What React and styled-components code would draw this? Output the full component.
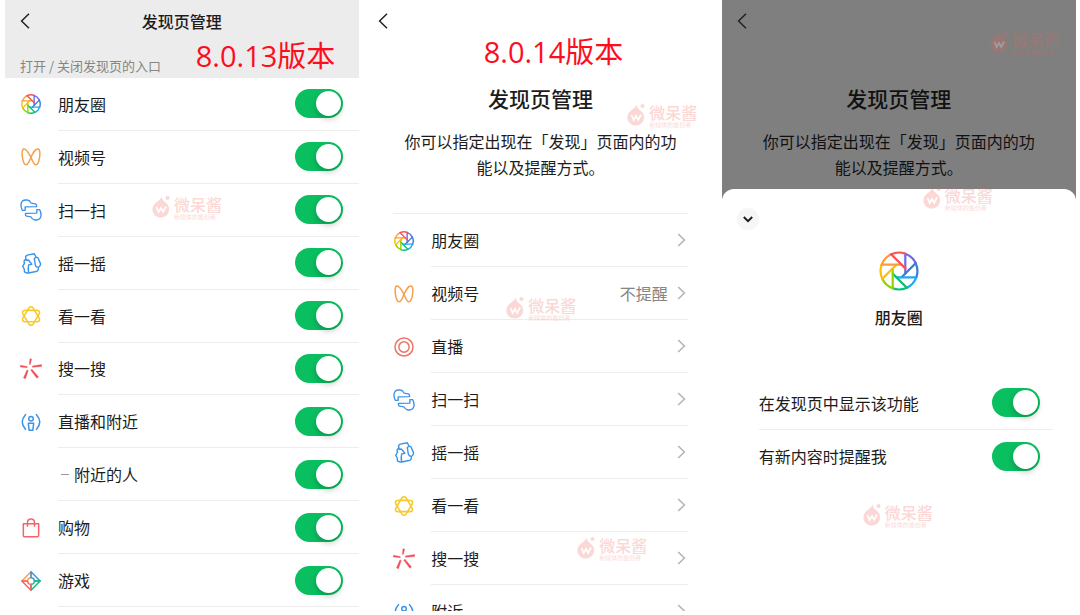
import React from 'react';
import styled, {createGlobalStyle, css} from 'styled-components';

const BLADES = ['#7468e8', '#3a7bd8', '#1fa8f5', '#07c178', '#91d300', '#fcc000', '#ff9a3a', '#fa5151'];

const Moments = ({size = 20, weight = 2.8}) => (
    <svg width={size} height={size} viewBox="0 0 40 40" fill="none" strokeWidth={weight} strokeLinecap="round">
        {BLADES.map((color, i) => (
            <path
                key={color}
                d="M26.3 22.6V2.7A18.4 18.4 0 0 1 36.7 12.2"
                stroke={color}
                transform={`rotate(${i * 45} 20 20)`}
            />
        ))}
    </svg>
);

const Channels = () => (
    <svg width="20" height="20" viewBox="0 0 24 24" fill="none" stroke="#f5a04a" strokeWidth="1.8">
        <path d="M12 12.4C9 6.6 5.8 1.8 3.3 2.4C-.4 3.6 1.8 21.6 6.4 21.4C8.6 21.2 10.5 16.4 12 12.4C14 7.4 17.8 1.8 20.7 2.4C24.4 3.6 22.2 21.6 17.6 21.4C15.4 21.2 13.6 15.8 12 12.4Z"/>
    </svg>
);

const Scan = () => (
    <svg width="22" height="22" viewBox="-1 -1 64 64" fill="none" stroke="#3d94e6" strokeWidth="4" strokeLinejoin="round">
        <path d="M14 32H6Q1 24 2 13Q5 2 15 2H20Q28 3 31 11L44 13Q48 15 47 21L14 22Z"/>
        <path d="M48 30H56Q61 38 60 49Q57 60 47 60H42Q34 59 31 51L18 49Q14 47 15 41L48 40Z"/>
    </svg>
);

const Shake = () => (
    <svg width="21" height="21" viewBox="-1 0 58 60" fill="none" stroke="#3d94e6" strokeWidth="4" strokeLinejoin="round">
        <path d="M13 23L11 10L16 6L36 2L41 12"/>
        <path d="M36 16Q41 11 46 13L54 31Q54 38 48 41Q41 41 39 35Z"/>
        <path d="M13 17Q4 21 8 29L3 38L7 45L8 54Q14 58 20 57L44 52Q49 49 47 41"/>
        <path d="M13 21L19 20L29 32L20 34Q17 43 20 57"/>
    </svg>
);

const Look = () => (
    <svg width="20" height="20" viewBox="0 0 24 24" fill="none" stroke="#f7c92b" strokeWidth="1.9" strokeLinejoin="round">
        <path d="M9.2 2.8Q12 -1 14.800 2.800L21.8 14.600Q23.4 18.6 19 18.8H5Q.6 18.600 2.200 14.600Z"/>
        <path d="M9.2 21.2Q12 25 14.800 21.200L21.8 9.400Q23.4 5.400 19 5.200H5Q.6 5.400 2.200 9.400Z"/>
    </svg>
);

const Search = () => (
    <svg width="22" height="22" viewBox="0 0 64 64" fill="#ee5057" stroke="#ee5057" strokeWidth="1">
        <path d="M29 2L34 3L30 19L27 18Z"/>
        <path d="M1 21L21 25V28L1 26Z"/>
        <path d="M36 23L63 19V25L36 27Z"/>
        <path d="M20 35L24 36L16 60L10 58Z"/>
        <path d="M31 35L35 33L54 55L49 59Z"/>
    </svg>
);

const Nearby = () => (
    <svg width="20" height="20" viewBox="0 0 24 24" fill="none" stroke="#3d94e6" strokeWidth="1.8" strokeLinecap="round">
        <path d="M5.4 3.2Q-2.4 12 5.4 20.8"/>
        <path d="M18.6 3.2Q26.4 12 18.6 20.8"/>
        <circle cx="12" cy="8" r="2.7"/>
        <path d="M8.8 13.6H15.2L14.2 22H9.8Z" strokeLinejoin="round"/>
    </svg>
);

const Shop = () => (
    <svg width="20" height="20" viewBox="0 0 24 24" fill="none" stroke="#f56467" strokeWidth="1.8" strokeLinejoin="round">
        <path d="M2.8 6.8H21.2V20.6Q21.2 22.6 19.2 22.6H4.8Q2.8 22.6 2.8 20.6Z"/>
        <path d="M7.8 10.6V5.4Q8 1.2 12 1.2Q16 1.2 16.2 5.4V10.6"/>
    </svg>
);

const Game = () => (
    <svg width="20" height="20" viewBox="0 0 24 24" fill="none" strokeWidth="1.8" strokeLinejoin="round">
        <path d="M12 8V1L1 12H8A4 4 0 0 1 12 8" stroke="#f5a04a"/>
        <path d="M16 12H23L12 1V8A4 4 0 0 1 16 12" stroke="#3d94e6"/>
        <path d="M12 16V23L23 12H16A4 4 0 0 1 12 16" stroke="#16bd7c"/>
        <path d="M8 12H1L12 23V16A4 4 0 0 1 8 12" stroke="#f56467"/>
    </svg>
);

const Live = () => (
    <svg width="20" height="20" viewBox="0 0 24 24" fill="none" stroke="#ec7467" strokeWidth="1.8">
        <circle cx="12" cy="12" r="10.8"/>
        <circle cx="12" cy="12" r="6.2"/>
    </svg>
);

const BackIcon = () => (
    <svg width="10" height="16" viewBox="0 0 10 16" fill="none" stroke="#222" strokeWidth="1.5">
        <path d="M9 .8L1.6 8L9 15.2"/>
    </svg>
);

const NextIcon = () => (
    <svg width="9" height="14" viewBox="0 0 9 14" fill="none" stroke="#b5b5b5" strokeWidth="1.6">
        <path d="M1.2 1L7.4 7L1.2 13"/>
    </svg>
);

const DownIcon = () => (
    <svg width="10" height="7" viewBox="0 0 10 7" fill="none" stroke="#1c1c1c" strokeWidth="2">
        <path d="M.8 1L5 5.2L9.2 1"/>
    </svg>
);

const Watermark = ({x, y}) => (
    <Mark $x={x} $y={y}>
        <svg width="18" height="23" viewBox="0 0 18 23" fill="currentColor">
            <path d="M10 1C9 5 13 6.500 15.500 9.500C19.500 15 15.500 22.500 9 22.500C2 22.500-1.500 15.500 1.500 10.500C3.800 6.500 8 6 10 1Z"/>
            <circle cx="15.500" cy="3" r="2"/>
            <path d="M4.500 12L6.600 17L9 13L11.200 17L14 11.500" fill="none" stroke="#fff" strokeWidth="1.700"/>
        </svg>
        <MarkText>
            <MarkName>微呆酱</MarkName>
            <MarkNote>新媒体的酱创者</MarkNote>
        </MarkText>
    </Mark>
);

const switches = [
    {name: '朋友圈', icon: <Moments/>},
    {name: '视频号', icon: <Channels/>},
    {name: '扫一扫', icon: <Scan/>},
    {name: '摇一摇', icon: <Shake/>},
    {name: '看一看', icon: <Look/>},
    {name: '搜一搜', icon: <Search/>},
    {name: '直播和附近', icon: <Nearby/>},
    {name: '附近的人', sub: true},
    {name: '购物', icon: <Shop/>},
    {name: '游戏', icon: <Game/>},
];

const links = [
    {name: '朋友圈', icon: <Moments/>},
    {name: '视频号', icon: <Channels/>, value: '不提醒'},
    {name: '直播', icon: <Live/>},
    {name: '扫一扫', icon: <Scan/>},
    {name: '摇一摇', icon: <Shake/>},
    {name: '看一看', icon: <Look/>},
    {name: '搜一搜', icon: <Search/>},
    {name: '附近', icon: <Nearby/>},
];

const Intro = () => (
    <>
        <BigTitle>发现页管理</BigTitle>
        <Description>你可以指定出现在「发现」页面内的功能以及提醒方式。</Description>
    </>
);

const Back = () => <BackButton type="button" aria-label="返回"><BackIcon/></BackButton>;

export default () => {

    return (
        <Page>
            <GlobalStyle/>
            <Phone>
                <Header>
                    <Nav>
                        <Back/>
                        <NavTitle>发现页管理</NavTitle>
                    </Nav>
                    <HeaderBottom>
                        <HeaderNote>打开 / 关闭发现页的入口</HeaderNote>
                        <Version>8.0.13版本</Version>
                    </HeaderBottom>
                </Header>
                <SwitchList>
                    {switches.map(({name, icon, sub}, i) => (
                        <SwitchRow key={name}>
                            <IconBox>{icon}</IconBox>
                            <RowBody $inset={16}>
                                <RowLabel htmlFor={`entry-${i}`}>
                                    {sub && <Dash/>}
                                    {name}
                                </RowLabel>
                                <Toggle id={`entry-${i}`} defaultChecked/>
                            </RowBody>
                        </SwitchRow>
                    ))}
                </SwitchList>
                <Watermark x={147} y={195}/>
            </Phone>

            <Phone>
                <Nav><Back/></Nav>
                <VersionCenter>8.0.14版本</VersionCenter>
                <Intro/>
                <LinkList>
                    {links.map(({name, icon, value}) => (
                        <LinkRow key={name}>
                            <RowLink href="#">
                                <IconBox>{icon}</IconBox>
                                <RowBody $inset={2}>
                                    <LinkName>{name}</LinkName>
                                    {value && <Value>{value}</Value>}
                                    <NextIcon/>
                                </RowBody>
                            </RowLink>
                        </LinkRow>
                    ))}
                </LinkList>
                <Watermark x={264} y={103}/>
                <Watermark x={143} y={296}/>
                <Watermark x={214} y={536}/>
            </Phone>

            <Phone>
                <Dimmed>
                    <Nav><Back/></Nav>
                    <Spacer/>
                    <Intro/>
                </Dimmed>
                <SheetWrap>
                    <Sheet>
                        <CloseButton type="button" aria-label="收起"><DownIcon/></CloseButton>
                        <Feature>
                            <Moments size={40} weight={2.2}/>
                            <FeatureName>朋友圈</FeatureName>
                        </Feature>
                        <Options>
                            <OptionRow>
                                <RowLabel htmlFor="show">在发现页中显示该功能</RowLabel>
                                <Toggle id="show" defaultChecked/>
                            </OptionRow>
                            <OptionRow>
                                <RowLabel htmlFor="remind">有新内容时提醒我</RowLabel>
                                <Toggle id="remind" defaultChecked/>
                            </OptionRow>
                        </Options>
                    </Sheet>
                </SheetWrap>
                <Watermark x={268} y={30}/>
                <Watermark x={201} y={186}/>
                <Watermark x={141} y={503}/>
            </Phone>
        </Page>
    )
};

const GlobalStyle = createGlobalStyle`
  *{
    box-sizing: border-box;
  }
  body{
    margin: 0;
    background: #fff;
    color: #1c1c1c;
    font-family: "Noto Sans CJK SC", sans-serif;
    font-size: 16px;
  }
  button{
    border: 0;
    padding: 0;
    background: none;
    cursor: pointer;
  }
  ul, h1, h2, p{
    margin: 0;
    padding: 0;
    list-style: none;
  }
`;

const Page = styled.div`
  display: grid;
  grid-template-columns: repeat(3, minmax(0, 1fr));
  gap: 4px;
  height: 100vh;
  padding: 0 4px 4px 5px;
`;

const Phone = styled.section`
  position: relative;
  display: flex;
  flex-direction: column;
  min-height: 0;
  overflow: hidden;
`;

const Header = styled.header`
  background: #ececec;
`;

const Nav = styled.div`
  flex-shrink: 0;
  display: grid;
  grid-template-columns: 30px 1fr 30px;
  align-items: center;
  height: 36px;
  padding: 6px 16px 0 15px;
`;

const BackButton = styled.button`
  display: flex;
  align-items: center;
  height: 30px;
`;

const NavTitle = styled.h1`
  text-align: center;
  font-size: 16px;
  line-height: 30px;
  font-weight: 500;
`;

const HeaderBottom = styled.div`
  display: flex;
  justify-content: space-between;
  align-items: flex-start;
  height: 42px;
  padding: 4px 24px 0 15px;
`;

const HeaderNote = styled.p`
  align-self: flex-end;
  font-size: 13px;
  line-height: 24px;
  color: #858585;
`;

const Version = styled.p`
  font-family: "Open Sans", "Noto Sans CJK SC", sans-serif;
  font-size: 29px;
  line-height: 32px;
  color: #fe0d1f;
`;

const VersionCenter = styled(Version)`
  padding-left: 26px;
  text-align: center;
`;

const BigTitle = styled.h2`
  margin-top: 16px;
  text-align: center;
  font-size: 21px;
  line-height: 28px;
  font-weight: 500;
`;

const Description = styled.p`
  margin-top: 16px;
  padding: 0 36px;
  text-align: center;
  line-height: 26px;
`;

const SwitchList = styled.ul`
  flex: 1;
  display: flex;
  flex-direction: column;
  padding: 0 0 4px 16px;
`;

const SwitchRow = styled.li`
  flex: 1;
  display: flex;
  align-items: stretch;
  gap: 17px;
`;

const IconBox = styled.span`
  flex: 0 0 20px;
  min-width: 0;
  display: flex;
  align-items: center;
  justify-content: center;
  svg{
    flex-shrink: 0;
  }
`;

const RowBody = styled.div`
  flex: 1;
  display: flex;
  align-items: center;
  padding-right: ${({$inset}) => $inset}px;
  border-bottom: 1px solid #ededed;
`;

const RowLabel = styled.label`
  flex: 1;
  display: flex;
  align-items: center;
  line-height: 24px;
`;

const Dash = styled.i`
  width: 8px;
  height: 1px;
  margin: 0 5px 0 3px;
  background: #999;
`;

const Toggle = styled.input.attrs({type: 'checkbox'})`
  appearance: none;
  width: 48px;
  height: 29px;
  margin: 0;
  padding: 2px;
  border-radius: 15px;
  background: #ddd;
  cursor: pointer;
  &::before{
    content: "";
    display: block;
    width: 25px;
    height: 25px;
    border-radius: 50%;
    background: #fff;
    box-shadow: 0 3px 6px rgba(0, 0, 0, .22);
  }
  &:checked{
    background: #0abf5f;
  }
  &:checked::before{
    margin-left: auto;
  }
`;

const LinkList = styled.ul`
  margin: 33px 30px 0;
  border-top: 1px solid #ededed;
`;

const LinkRow = styled.li`
  height: 53px;
`;

const RowLink = styled.a`
  display: flex;
  gap: 17px;
  height: 100%;
  padding-left: 1px;
  color: inherit;
  text-decoration: none;
`;

const LinkName = styled.span`
  flex: 1;
`;

const Value = styled.span`
  margin-right: 9px;
  color: #858585;
`;

const Dimmed = styled.div`
  padding-bottom: 9px;
  background: #7f7f7f;
  color: #111;
`;

const Spacer = styled.div`
  height: 32px;
`;

const SheetWrap = styled.div`
  flex: 1;
  display: flex;
  background: linear-gradient(#7f7f7f 16px, #fff 16px);
`;

const Sheet = styled.div`
  flex: 1;
  padding-top: 19px;
  border-radius: 12px 12px 0 0;
  background: #fff;
`;

const CloseButton = styled.button`
  display: flex;
  align-items: center;
  justify-content: center;
  width: 22px;
  height: 22px;
  margin-left: 15px;
  border-radius: 50%;
  background: #f6f6f6;
`;

const Feature = styled.div`
  display: flex;
  flex-direction: column;
  align-items: center;
  margin-top: 21px;
`;

const FeatureName = styled.h2`
  margin-top: 14px;
  font-size: 16px;
  line-height: 24px;
  font-weight: 500;
`;

const Options = styled.div`
  margin: 47px 23px 0 37px;
`;

const OptionRow = styled.div`
  display: flex;
  align-items: center;
  height: 53px;
  padding-right: 13px;
  & + &{
    border-top: 1px solid #ededed;
  }
`;

const Mark = styled.div`
  position: absolute;
  display: flex;
  gap: 4px;
  color: #ef5f52;
  opacity: .24;
  pointer-events: none;
  ${({$x, $y}) => css`
    left: ${$x}px;
    top: ${$y}px;
  `}
`;

const MarkText = styled.div`
  display: flex;
  flex-direction: column;
`;

const MarkName = styled.span`
  font-size: 16px;
  line-height: 18px;
  font-weight: 500;
`;

const MarkNote = styled.span`
  font-size: 6px;
  line-height: 7px;
`;
